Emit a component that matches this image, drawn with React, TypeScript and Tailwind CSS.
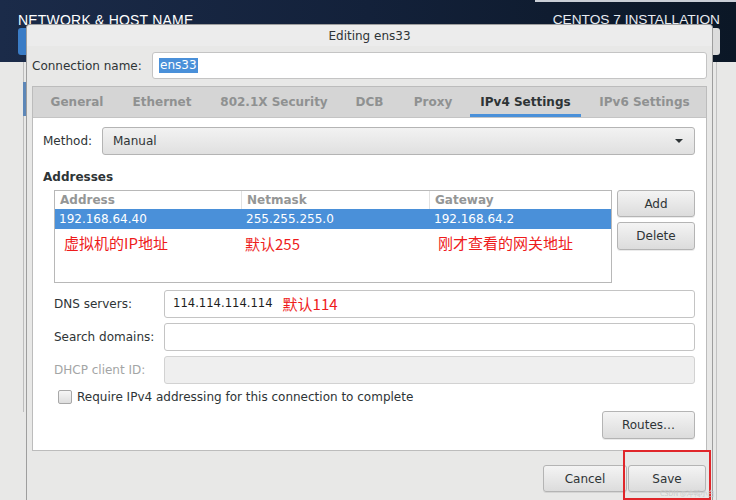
import React from "react";

const ui = { fontFamily: '"DejaVu Sans", "Noto Sans", sans-serif' };
const cjk = { fontFamily: '"Noto Sans CJK SC", "DejaVu Sans", sans-serif' };
const hdr = { fontFamily: '"Liberation Sans", Arial, sans-serif' };

function Btn({ children, className = "" }: { children: React.ReactNode; className?: string }) {
  return (
    <div
      className={
        "flex items-center justify-center rounded-[3px] border border-[#b4b4b4] bg-gradient-to-b from-[#f4f4f4] to-[#dcdcdc] text-[12px] text-[#2e3436] shadow-[0_1px_0_rgba(0,0,0,0.08)] " +
        className
      }
    >
      {children}
    </div>
  );
}

function Field({ children, disabled = false }: { children?: React.ReactNode; disabled?: boolean }) {
  return (
    <div
      className={
        "flex h-full flex-1 items-center rounded-[3px] border px-[8px] " +
        (disabled ? "border-[#d2d2d2] bg-[#efefef]" : "border-[#c4c4c4] bg-white")
      }
    >
      {children}
    </div>
  );
}

export default function App() {
  const tabs = [
    { t: "General", w: 76 },
    { t: "Ethernet", w: 86 },
    { t: "802.1X Security", w: 130 },
    { t: "DCB", w: 53 },
    { t: "Proxy", w: 66 },
    { t: "IPv4 Settings", w: 111, active: true },
    { t: "IPv6 Settings", w: 119 },
  ];
  return (
    <div className="relative h-[500px] w-[736px] overflow-hidden bg-[#e8e8e7]" style={ui}>
      {/* background installer window */}
      <div className="relative h-[62px] w-full bg-gradient-to-r from-[#1b2b49] via-[#13213a] to-[#0b1726]">
        <div className="flex justify-between pl-[18px] pr-[16px] pt-[10px] text-[14px] text-white" style={hdr}>
          <span className="tracking-[0.2px]">NETWORK &amp; HOST NAME</span>
          <span className="text-[13.7px] text-[#e8ecf2]">CENTOS 7 INSTALLATION</span>
        </div>
        <div className="absolute left-[18px] top-[28px] h-[27px] w-[12px] rounded-l-[3px] bg-[#3a7cc6]" />
        <div className="absolute left-[706px] top-[28px] h-[27px] w-[14px] rounded-r-[3px] bg-[#dcdcdc]" />
        <div className="absolute left-[535px] top-0 h-[2px] w-[201px] bg-[#c9ced6]" />
      </div>
      <div className="absolute left-[23px] top-[62px] h-[350px] w-px bg-[#bdbdbd]" />
      <div className="absolute left-[23px] top-[82px] h-[34px] w-[3px] bg-[#5d87b8]" />
      <div className="absolute left-[716px] top-[62px] h-[438px] w-px bg-[#c2c2c2]" />

      {/* dialog */}
      <div className="absolute left-[26px] top-[24px] flex h-[490px] w-[687px] flex-col rounded-t-[4px] border-x border-t border-[#9e9e9e] bg-[#e8e8e7]">
        <div className="flex h-[21px] items-center justify-center rounded-t-[4px] bg-[#ececec] text-[12px] text-[#2e3436]">
          Editing ens33
        </div>
        <div className="flex flex-col px-[5px] pt-[6px]">
          <div className="flex h-[27px] items-center">
            <div className="w-[120px] text-[12px] text-[#2e3436]">Connection name:</div>
            <Field>
              <span className="ml-[-2px] bg-[#4a90d9] px-[1px] text-[12px] leading-[15px] text-white">ens33</span>
            </Field>
          </div>

          {/* notebook */}
          <div className="mt-[7px] flex flex-col border border-[#bcbcbc]">
            <div className="flex h-[30px] gap-[4px] bg-[#d5d5d5] pl-[6px]">
              {tabs.map((tb) => (
                <div
                  key={tb.t}
                  className={
                    "flex h-full shrink-0 items-center justify-center text-[12px] font-bold " +
                    (tb.active
                      ? "border-b-[3px] border-[#4a90d9] pt-[2px] text-[#2e3436]"
                      : "pb-[1px] text-[#8f9191]")
                  }
                  style={{ width: tb.w }}
                >
                  {tb.t}
                </div>
              ))}
            </div>
            <div className="flex h-[333px] flex-col border-t border-[#c4c4c4] bg-white pt-[9px] pl-[10px] pr-[11px]">
              {/* method */}
              <div className="flex h-[28px] items-center">
                <div className="w-[59px] text-[12px] text-[#2e3436]">Method:</div>
                <div className="flex h-full flex-1 items-center justify-between rounded-[3px] border border-[#b4b4b4] bg-gradient-to-b from-[#f2f2f2] to-[#e0e0e0] pl-[10px] pr-[10px] text-[12px] text-[#2e3436]">
                  <span>Manual</span>
                  <svg width="10" height="6" viewBox="0 0 10 6">
                    <path d="M1 1 L9 1 L5 5 Z" fill="#2e3436" />
                  </svg>
                </div>
              </div>
              <div className="mt-[15px] h-[15px] text-[12px] font-bold leading-[15px] text-[#2e3436]">Addresses</div>

              {/* addresses table */}
              <div className="mt-[5px] flex gap-[5px] pl-[11px]">
                <div className="flex h-[93px] w-[558px] flex-col border border-[#b8b8b8] bg-white">
                  <div className="flex h-[18px] text-[12px] font-bold text-[#949696]">
                    <div className="flex w-[187px] items-center border-r border-[#e2e2e2] pl-[5px]">Address</div>
                    <div className="flex w-[188px] items-center border-r border-[#e2e2e2] pl-[5px]">Netmask</div>
                    <div className="flex flex-1 items-center pl-[5px]">Gateway</div>
                  </div>
                  <div className="flex h-[20px] bg-[#4a90d9] text-[12px] text-white">
                    <div className="flex w-[187px] items-center pl-[4px]">192.168.64.40</div>
                    <div className="flex w-[188px] items-center pl-[4px]">255.255.255.0</div>
                    <div className="flex flex-1 items-center pl-[4px]">192.168.64.2</div>
                  </div>
                  <div className="flex h-[28px] items-center text-[15px] text-[#ee1c1c]" style={cjk}>
                    <div className="w-[187px] pl-[9px]">虚拟机的IP地址</div>
                    <div className="w-[188px] pl-[3px] pt-[2px]">默认255</div>
                    <div className="flex-1 pl-[8px]">刚才查看的网关地址</div>
                  </div>
                </div>
                <div className="flex w-[78px] flex-col gap-[5px]">
                  <Btn className="h-[27px]">Add</Btn>
                  <Btn className="h-[28px]">Delete</Btn>
                </div>
              </div>

              {/* fields */}
              <div className="mt-[7px] flex flex-col gap-[5px] pl-[11px]">
                <div className="flex h-[28px] items-center">
                  <div className="w-[110px] text-[12px] text-[#2e3436]">DNS servers:</div>
                  <Field>
                    <span className="text-[11.6px] text-[#1e1e1e]">114.114.114.114</span>
                    <span className="ml-[10px] text-[15px] text-[#ee1c1c]" style={cjk}>
                      默认114
                    </span>
                  </Field>
                </div>
                <div className="flex h-[28px] items-center">
                  <div className="w-[110px] text-[12px] text-[#2e3436]">Search domains:</div>
                  <Field />
                </div>
                <div className="flex h-[28px] items-center">
                  <div className="w-[110px] text-[12px] text-[#a3a5a5]">DHCP client ID:</div>
                  <Field disabled />
                </div>
              </div>
              <div className="mt-[6px] flex h-[14px] items-center pl-[15px]">
                <div className="h-[14px] w-[14px] rounded-[2px] border border-[#a8a8a8] bg-gradient-to-b from-[#f6f6f6] to-[#dedede]" />
                <span className="ml-[5px] text-[12px] text-[#2e3436]">
                  Require IPv4 addressing for this connection to complete
                </span>
              </div>
              <div className="mt-[7px] flex justify-end">
                <Btn className="h-[28px] w-[93px]">Routes…</Btn>
              </div>
            </div>
          </div>

          {/* footer */}
          <div className="flex justify-end gap-[1px] pr-[1px] pt-[14px]">
            <Btn className="h-[27px] w-[84px]">Cancel</Btn>
            <Btn className="h-[27px] w-[78px]">Save</Btn>
          </div>
        </div>
      </div>

      {/* annotation */}
      <div className="absolute left-[623px] top-[450px] h-[50px] w-[88px] border-2 border-[#e0262a]" />
      <div className="absolute left-[660px] top-[488px] text-[7px] text-[#c9c9c9]" style={cjk}>
        CSDN @冲鸭小白
      </div>
    </div>
  );
}
